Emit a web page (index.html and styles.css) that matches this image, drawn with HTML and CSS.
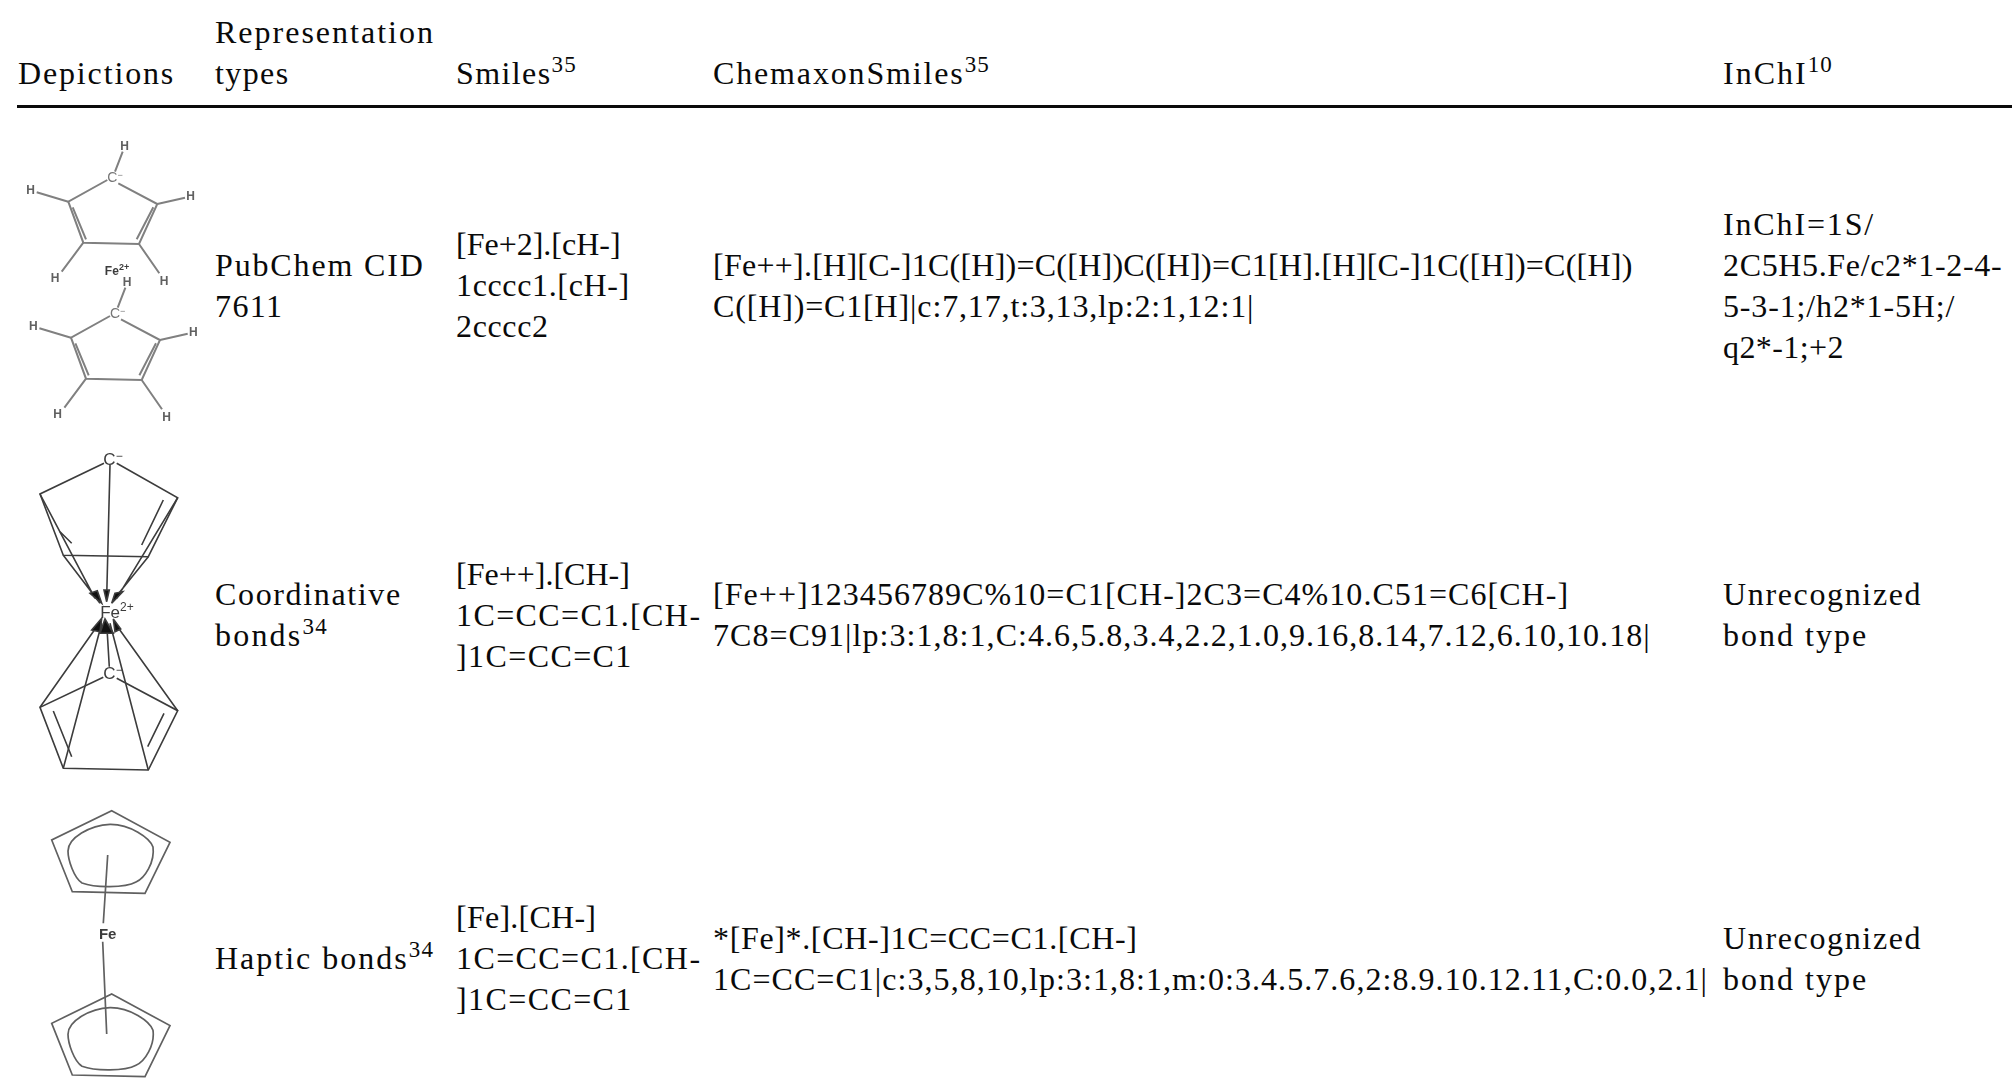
FILE: index.html
```html
<!DOCTYPE html>
<html lang="en">
<head>
    <meta charset="UTF-8">
    <meta name="viewport" content="width=device-width, initial-scale=1.0">
    <title>Ferrocene representations</title>
    <link rel="stylesheet" href="styles.css">
</head>
<body>
    <table class="repr-table">
        <colgroup>
            <col class="col-depiction">
            <col class="col-type">
            <col class="col-smiles">
            <col class="col-chemaxon">
            <col class="col-inchi">
        </colgroup>
        <thead>
            <tr>
                <th class="first"><span class="ls18">Depictions</span></th>
                <th><span class="ls20">Representation</span><br><span class="ls14">types</span></th>
                <th><span class="ls14">Smiles</span><sup>35</sup></th>
                <th><span class="ls18">ChemaxonSmiles</span><sup>35</sup></th>
                <th><span class="ls20">InChI</span><sup>10</sup></th>
            </tr>
        </thead>
        <tbody>
            <tr class="row-pubchem">
                <td class="depiction">
                    <svg class="mol mol-pubchem" viewBox="17 108 193 339" width="193" height="339">
                        <defs>
                            <g id="cp-ring">
                                <path d="M115 171.7L122.7 151.7M36.7 192.3L68.3 201.7M157.3 204L185 197.7M83.3 242.7L61.7 271.7M139 244L159.3 273.3"/>
                                <path d="M107.3 180L68.3 201.7L83.3 242.7L139 244L157.3 204L118.3 183.3"/>
                                <path d="M72.7 207.3L86 239.3M153.3 207.3L136.7 239.3"/>
                                <text x="115" y="182" class="atom">C<tspan class="atom-sup" dy="-4">−</tspan></text>
                                <text x="124.5" y="150" class="atom atom-h">H</text>
                                <text x="30.7" y="194" class="atom atom-h">H</text>
                                <text x="190.7" y="200" class="atom atom-h">H</text>
                                <text x="55" y="282" class="atom atom-h">H</text>
                                <text x="164" y="285" class="atom atom-h">H</text>
                            </g>
                        </defs>
                        <use href="#cp-ring"/>
                        <use href="#cp-ring" transform="translate(2.7 136)"/>
                        <text x="117" y="275" class="atom atom-fe">Fe<tspan class="atom-sup" dy="-5">2+</tspan></text>
                    </svg>
                </td>
                <td><span class="ls18">PubChem CID</span><br><span class="ls14">7611</span></td>
                <td><span class="ls00">[Fe+2].[cH-]</span><br><span class="ls06">1cccc1.[cH-]</span><br><span class="ls06">2cccc2</span></td>
                <td><span class="ls02">[Fe++].[H][C-]1C([H])=C([H])C([H])=C1[H].[H][C-]1C([H])=C([H])</span><br><span class="ls08">C([H])=C1[H]|c:7,17,t:3,13,lp:2:1,12:1|</span></td>
                <td><span class="ls18">InChI=1S/</span><br><span class="ls06">2C5H5.Fe/c2*1-2-4-</span><br><span class="ls08">5-3-1;/h2*1-5H;/</span><br><span class="ls04">q2*-1;+2</span></td>
            </tr>
            <tr class="row-coord">
                <td class="depiction">
                    <svg class="mol mol-coord" viewBox="17 447 193 336" width="193" height="336">
                        <path d="M104 463.3L40 494L63.3 555.3L148.3 556.7L177.7 497.7L116.7 463.3"/>
                        <path d="M163.3 500L141.7 545M60 531.7L71.7 543.3"/>
                        <path d="M40 494L95 598.3M63.3 555.3L100 603.3M110 465L106.7 596.7M177.7 497.7L116.7 598.3M148.3 556.7L113.3 600"/>
                        <path class="wedge" d="M90 593.3L97.3 590.7L101.7 603.3ZM104 590L109.3 590L106.7 601.7ZM115 593.3L122.7 591.7L111.7 603.3Z"/>
                        <text x="113" y="465" class="atom-dark">C<tspan class="atom-sup" dy="-5">−</tspan></text>
                        <text x="117" y="618" class="atom-dark">Fe<tspan class="atom-sup" dy="-7">2+</tspan></text>
                        <path d="M103.3 677.3L40 707.3L63.3 768.3L148.3 770L177.7 710.7L116.7 678.3"/>
                        <path d="M53.3 711L71.7 756.7M164 713.3L147.7 746.7"/>
                        <path d="M40 707.3L96.7 626.7M63.3 768.3L101.7 623.3M109.3 666.7L106.7 623.3M148.3 770L110 623.3M177.7 710.7L115 623.3"/>
                        <path class="wedge" d="M91.7 630L101.7 618.3L100 631.7ZM100 633.3L105 619L113.3 633.3ZM113.3 619L120.7 629L115 631.7Z"/>
                        <text x="113" y="679" class="atom-dark">C<tspan class="atom-sup" dy="-5">−</tspan></text>
                    </svg>
                </td>
                <td><span class="ls16">Coordinative</span><br><span class="ls22">bonds</span><sup>34</sup></td>
                <td><span class="ls00">[Fe++].[CH-]</span><br><span class="ls14">1C=CC=C1.[CH-</span><br><span class="ls14">]1C=CC=C1</span></td>
                <td><span class="ls10">[Fe++]123456789C%10=C1[CH-]2C3=C4%10.C51=C6[CH-]</span><br><span class="ls10">7C8=C91|lp:3:1,8:1,C:4.6,5.8,3.4,2.2,1.0,9.16,8.14,7.12,6.10,10.18|</span></td>
                <td><span class="ls16">Unrecognized</span><br><span class="ls20">bond type</span></td>
            </tr>
            <tr class="row-haptic">
                <td class="depiction">
                    <svg class="mol mol-haptic" viewBox="17 783 193 309" width="193" height="309">
                        <defs>
                            <g id="cp-haptic">
                                <path d="M111.7 810.7L170 842.3L145 893.3L72.3 891.7L51.7 840Z"/>
                                <path d="M110 824.3C130 824 150 838 153 847C155 862 145 878 136 882C125 888 95 888 82 883C74 878 68 860 68 851C68 838 90 825 110 824.3Z"/>
                            </g>
                        </defs>
                        <use href="#cp-haptic"/>
                        <use href="#cp-haptic" transform="translate(0 183.3)"/>
                        <path d="M107.7 855L103.3 923.3M102.7 941.7L106.7 1034"/>
                        <text x="107.7" y="939" class="atom-dark">Fe</text>
                    </svg>
                </td>
                <td><span class="ls20">Haptic bonds</span><sup>34</sup></td>
                <td><span class="ls02">[Fe].[CH-]</span><br><span class="ls14">1C=CC=C1.[CH-</span><br><span class="ls14">]1C=CC=C1</span></td>
                <td><span class="ls06">*[Fe]*.[CH-]1C=CC=C1.[CH-]</span><br><span class="ls10">1C=CC=C1|c:3,5,8,10,lp:3:1,8:1,m:0:3.4.5.7.6,2:8.9.10.12.11,C:0.0,2.1|</span></td>
                <td><span class="ls16">Unrecognized</span><br><span class="ls20">bond type</span></td>
            </tr>
        </tbody>
    </table>
</body>
</html>
```

FILE: styles.css
```css
html, body {
    margin: 0;
    height: 1092px;
    overflow: hidden;
    background-color: #ffffff;
}

.repr-table {
    margin-left: 17px;
    width: 1995px;
    table-layout: fixed;
    border-collapse: separate;
    border-spacing: 0;
    font-family: "Liberation Serif", serif;
    font-size: 32px;
    line-height: 41px;
    color: #0a0a0a;
}

.col-depiction { width: 193px; }
.col-type { width: 241px; }
.col-smiles { width: 257px; }
.col-chemaxon { width: 1010px; }
.col-inchi { width: 294px; }

th {
    height: 108px;
    box-sizing: border-box;
    padding: 0 0 11px 5px;
    border-bottom: 3px solid #0a0a0a;
    font-weight: normal;
    text-align: left;
    vertical-align: bottom;
    white-space: nowrap;
}

th.first {
    padding-left: 1px;
}

td {
    padding: 0 0 0 5px;
    vertical-align: middle;
    white-space: nowrap;
}

sup {
    font-size: 23px;
    line-height: 0;
    letter-spacing: 1.2px;
    vertical-align: 12px;
}

/* the serif is narrower than the one in the reference, so each line is spaced out by hand */
.ls00 { letter-spacing: 0; }
.ls02 { letter-spacing: 0.25px; }
.ls04 { letter-spacing: 0.4px; }
.ls06 { letter-spacing: 0.65px; }
.ls08 { letter-spacing: 0.85px; }
.ls10 { letter-spacing: 1.05px; }
.ls14 { letter-spacing: 1.4px; }
.ls16 { letter-spacing: 1.65px; }
.ls18 { letter-spacing: 1.85px; }
.ls20 { letter-spacing: 2px; }
.ls22 { letter-spacing: 2.2px; }

.row-pubchem td { padding-top: 16px; }
.row-haptic td { padding-top: 42px; }

.row-pubchem td.depiction,
.row-coord td.depiction,
.row-haptic td.depiction {
    padding: 0;
}

.mol {
    display: block;
    fill: none;
    filter: blur(0.4px);
}

.mol-pubchem { stroke: #808080; stroke-width: 2; }
.mol-coord { stroke: #3c3c3c; stroke-width: 1.6; }
.mol-haptic { stroke: #606060; stroke-width: 1.7; }

.wedge {
    fill: #111111;
}

.mol text {
    font-family: "Liberation Sans", sans-serif;
    stroke: none;
    text-anchor: middle;
}

.atom {
    font-size: 14px;
    fill: #777777;
}

.atom-h {
    font-size: 12px;
    font-weight: bold;
    fill: #606060;
}

.atom-fe {
    font-size: 12px;
    font-weight: bold;
    fill: #3c3c3c;
}

.atom-sup {
    font-size: 9px;
}

.mol-coord .atom-sup {
    font-size: 12px;
}

.atom-dark {
    font-size: 17px;
    fill: #3c3c3c;
}

.mol-haptic .atom-dark {
    font-weight: bold;
    font-size: 15px;
}
```
